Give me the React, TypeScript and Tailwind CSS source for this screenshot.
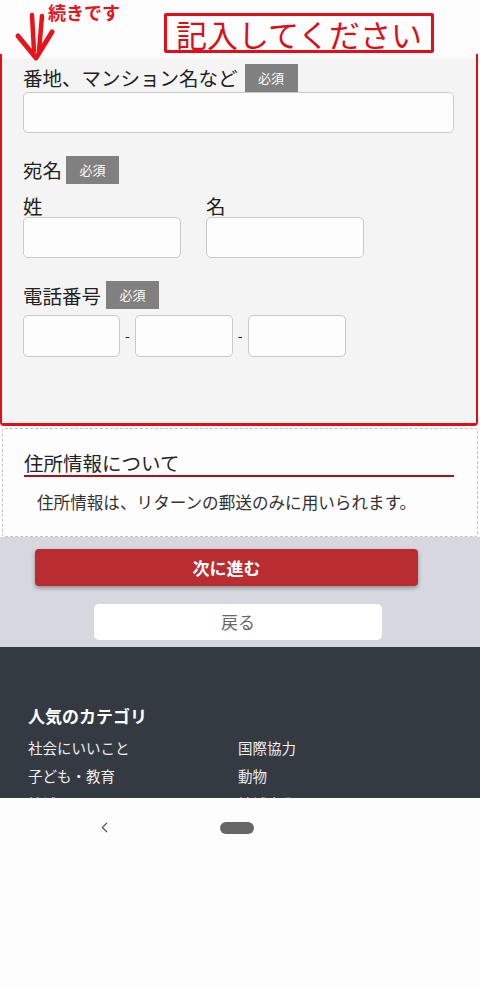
import { ChevronLeft } from 'lucide-react';

const font = { fontFamily: '"Noto Sans CJK JP", "Noto Sans", sans-serif' };

function Badge() {
  return (
    <span className="inline-flex h-[28px] w-[53px] items-center justify-center bg-[#808080] text-[13px] text-white">
      必須
    </span>
  );
}

function Field({ className }: { className: string }) {
  return <input className={`rounded-[5px] border border-[#c9c9c9] bg-[#fdfdfd] outline-none ${className}`} />;
}

export default function App() {
  const cats = [
    ['社会にいいこと', '国際協力'],
    ['子ども・教育', '動物'],
    ['地域', '地域文化'],
  ];

  return (
    <div className="w-[480px] bg-[#fdfdfd] text-[#222]" style={font}>
      {/* 注釈エリア */}
      <div className="relative h-[54px]">
        <span className="absolute left-[48px] top-[1px] text-[18px] font-bold leading-[22px] text-[#e8141c]">続きです</span>
        <svg className="absolute left-[13px] top-[11px] z-10" width="44" height="52" viewBox="0 0 44 52" fill="none">
          <path d="M19 4 L21 40" stroke="#e8141c" strokeWidth="4.5" strokeLinecap="round" />
          <path d="M29 5 L26 40" stroke="#e8141c" strokeWidth="4.5" strokeLinecap="round" />
          <path d="M5 25 L23 47 L39 21" stroke="#e8141c" strokeWidth="5" strokeLinecap="round" strokeLinejoin="round" />
        </svg>
        <div className="absolute left-[164px] top-[13px] flex h-[40px] w-[270px] items-center justify-center rounded-[2px] border-[3px] border-[#e0101a] text-[31px] leading-none text-[#d8101a]">
          記入してください
        </div>
      </div>

      {/* フォーム */}
      <div className="w-[478px] rounded-b-[4px] border-x-[2px] border-b-[3px] border-[#e0101a] pt-[6px]">
        <div className="bg-[#f4f4f4] px-[21px] pb-[66px] pt-[3px] shadow-[0_-2px_3px_rgba(0,0,0,0.04)]">
          <div className="flex items-center gap-[7px]">
            <span className="text-[19.5px]">番地、マンション名など</span>
            <Badge />
          </div>
          <Field className="block h-[41px] w-[431px]" />

          <div className="mt-[22px] flex items-center gap-[4px]">
            <span className="text-[19.5px]">宛名</span>
            <Badge />
          </div>
          <div className="mt-[9px] flex gap-[25px]">
            <div className="flex flex-col">
              <span className="h-[23px] text-[19.5px] leading-[23px]">姓</span>
              <Field className="h-[41px] w-[158px]" />
            </div>
            <div className="flex flex-col">
              <span className="h-[23px] text-[19.5px] leading-[23px]">名</span>
              <Field className="h-[41px] w-[158px]" />
            </div>
          </div>

          <div className="mt-[23px] flex items-center gap-[5px]">
            <span className="text-[19.5px]">電話番号</span>
            <Badge />
          </div>
          <div className="mt-[5px] flex items-center gap-[5px]">
            <Field className="h-[42px] w-[97px]" />
            <span className="text-[14px]">-</span>
            <Field className="h-[42px] w-[98px]" />
            <span className="text-[14px]">-</span>
            <Field className="h-[42px] w-[98px]" />
          </div>
        </div>
      </div>

      {/* 住所情報について */}
      <div className="mx-[2px] mt-[2px] h-[109px] rounded-[3px] border border-dashed border-[#c4c4c4] bg-[#fdfdfd] px-[21px] pt-[21px]">
        <div className="h-[27px] w-[430px] border-b-[2px] border-[#a5131d] text-[19.5px] leading-[26px]">住所情報について</div>
        <p className="mt-[12px] pl-[13px] text-[16.6px] leading-[26px] text-[#333]">住所情報は、リターンの郵送のみに用いられます。</p>
      </div>

      {/* ボタン */}
      <div className="flex h-[110px] flex-col items-center bg-[#d7d8df] pt-[12px]">
        <button className="ml-[-27px] h-[37px] w-[383px] rounded-[4px] bg-[#b92c2f] text-[17px] font-bold text-white shadow-[0_2px_4px_rgba(0,0,0,0.35)]">
          次に進む
        </button>
        <button className="ml-[-4px] mt-[18px] h-[36px] w-[288px] rounded-[5px] bg-white text-[17px] text-[#666]">
          戻る
        </button>
      </div>

      {/* フッター */}
      <div className="h-[151px] overflow-hidden bg-[#343a42] px-[28px] pt-[56px] text-white">
        <div className="text-[17px] font-bold leading-[26px]">人気のカテゴリ</div>
        <div className="mt-[5px] grid grid-cols-[210px_1fr] text-[14.5px] leading-[28px] text-[#eee]">
          {cats.flat().map((c) => (
            <span key={c}>{c}</span>
          ))}
        </div>
      </div>

      {/* ナビゲーションバー */}
      <div className="flex h-[190px] items-start bg-[#fdfdfd] pt-[20px]">
        <ChevronLeft className="ml-[96px] mt-[1px] h-[17px] w-[17px] text-[#555]" strokeWidth={1.6} />
        <div className="ml-[107px] mt-[4px] h-[12px] w-[34px] rounded-full bg-[#666]" />
      </div>
    </div>
  );
}
